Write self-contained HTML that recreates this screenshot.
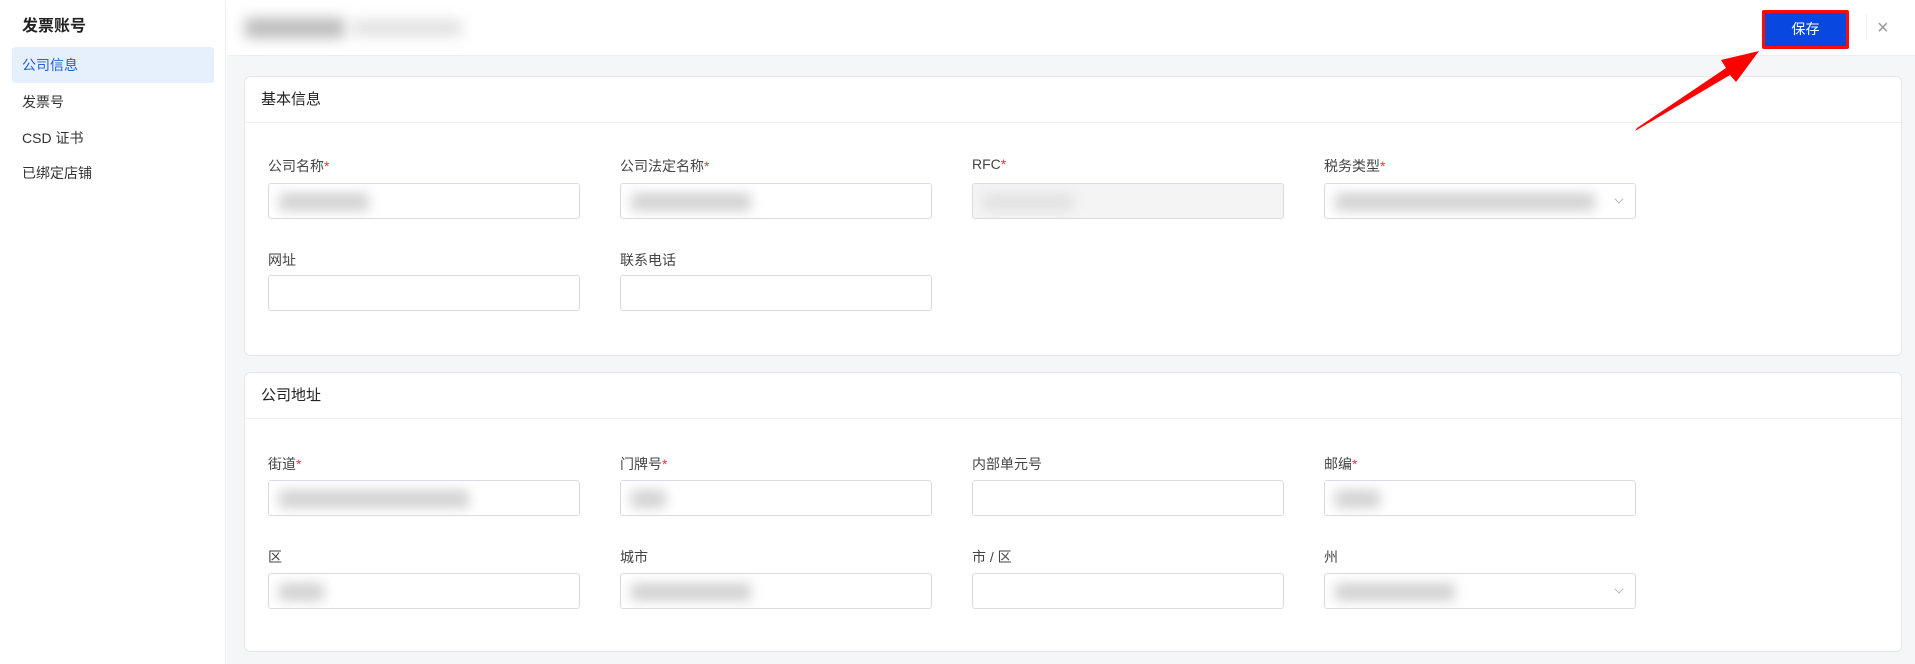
<!DOCTYPE html>
<html><head><meta charset="utf-8"><style>
*{box-sizing:border-box;margin:0;padding:0}
body{width:1915px;height:664px;overflow:hidden;background:#fff;font-family:"Liberation Sans","Noto Sans CJK SC",sans-serif;color:#333;position:relative}
.side{position:absolute;left:0;top:0;width:226px;height:664px;border-right:1px solid #eceef2;background:#fff}
.side h1{position:absolute;left:22px;top:12px;font-size:16px;font-weight:bold;color:#222}
.item{position:absolute;left:12px;width:202px;height:36px;line-height:36px;padding-left:10px;font-size:14px;color:#333}
.item.act{background:#e6f0fd;color:#1d5fd8;border-radius:3px}
.main{position:absolute;left:227px;top:56px;right:0;bottom:0;background:#f5f6f8}
.hdr{position:absolute;left:227px;top:0;right:0;height:56px;background:#fff;border-bottom:1px solid #eceef2}
.blur{position:absolute;background:#bbb;filter:blur(7px);border-radius:4px}
.card{position:absolute;left:244px;width:1658px;background:#fff;border:1px solid #e6e8ec;border-radius:6px}
.card .t{height:46px;line-height:46px;padding-left:16px;font-size:15px;color:#222;border-bottom:1px solid #eef0f2}
.lbl{position:absolute;font-size:14px;color:#444}
.lbl i{color:#e8363a;font-style:normal}
.in{position:absolute;width:312px;height:36px;border:1px solid #d9dbe0;border-radius:3px;background:#fff;overflow:hidden}
.in.dis{background:#f4f4f5}
.in .v{position:absolute;top:9px;left:10px;height:18px;background:#d2d2d2;filter:blur(6px);border-radius:3px}
.chev{position:absolute;right:12px;top:11px;width:8px;height:8px;border-right:1px solid #aaa;border-bottom:1px solid #aaa;transform:rotate(45deg) scale(.8)}
</style></head><body>
<div class="side">
<h1>发票账号</h1>
<div class="item act" style="top:47px">公司信息</div>
<div class="item" style="top:84px">发票号</div>
<div class="item" style="top:120px">CSD 证书</div>
<div class="item" style="top:155px">已绑定店铺</div>
</div>
<div class="hdr">
<div class="blur" style="left:18px;top:18px;width:100px;height:20px;background:#bbb"></div>
<div class="blur" style="left:125px;top:20px;width:110px;height:16px;background:#e0e0e0"></div>
<div style="position:absolute;left:1535px;top:10px;width:87px;height:39px;background:#0848e0;border:3px solid #ff0a0a;border-radius:2px;color:#fff;font-size:14px;text-align:center;line-height:33px">保存</div>
<div style="position:absolute;left:1639px;top:14px;width:1px;height:26px;background:#eee"></div>
<div style="position:absolute;left:1650px;top:17px;font-size:20px;color:#999;font-weight:300">×</div>
</div>
<div class="main"></div>
<div class="card" style="top:76px;height:280px"><div class="t">基本信息</div></div>
<div class="card" style="top:372px;height:280px"><div class="t">公司地址</div></div>

<div class="lbl" style="left:268px;top:156px">公司名称<i>*</i></div>
<div class="lbl" style="left:620px;top:156px">公司法定名称<i>*</i></div>
<div class="lbl" style="left:972px;top:156px">RFC<i>*</i></div>
<div class="lbl" style="left:1324px;top:156px">税务类型<i>*</i></div>
<div class="in" style="left:268px;top:183px"><div class="v" style="width:90px"></div></div>
<div class="in" style="left:620px;top:183px"><div class="v" style="width:120px"></div></div>
<div class="in dis" style="left:972px;top:183px"><div class="v" style="width:90px;background:#e2e2e2"></div></div>
<div class="in" style="left:1324px;top:183px"><div class="v" style="width:260px"></div><div class="chev"></div></div>

<div class="lbl" style="left:268px;top:250px">网址</div>
<div class="lbl" style="left:620px;top:250px">联系电话</div>
<div class="in" style="left:268px;top:275px"></div>
<div class="in" style="left:620px;top:275px"></div>

<div class="lbl" style="left:268px;top:454px">街道<i>*</i></div>
<div class="lbl" style="left:620px;top:454px">门牌号<i>*</i></div>
<div class="lbl" style="left:972px;top:454px">内部单元号</div>
<div class="lbl" style="left:1324px;top:454px">邮编<i>*</i></div>
<div class="in" style="left:268px;top:480px"><div class="v" style="width:190px"></div></div>
<div class="in" style="left:620px;top:480px"><div class="v" style="width:35px"></div></div>
<div class="in" style="left:972px;top:480px"></div>
<div class="in" style="left:1324px;top:480px"><div class="v" style="width:45px"></div></div>

<div class="lbl" style="left:268px;top:547px">区</div>
<div class="lbl" style="left:620px;top:547px">城市</div>
<div class="lbl" style="left:972px;top:547px">市 / 区</div>
<div class="lbl" style="left:1324px;top:547px">州</div>
<div class="in" style="left:268px;top:573px"><div class="v" style="width:45px"></div></div>
<div class="in" style="left:620px;top:573px"><div class="v" style="width:120px"></div></div>
<div class="in" style="left:972px;top:573px"></div>
<div class="in" style="left:1324px;top:573px"><div class="v" style="width:120px"></div><div class="chev"></div></div>

<svg style="position:absolute;left:0;top:0" width="1915" height="664"><polygon points="1635,131 1730,75 1736,82 1759,51 1721,60 1726,68 1637,128" fill="#ff0000"/></svg>
</body></html>
